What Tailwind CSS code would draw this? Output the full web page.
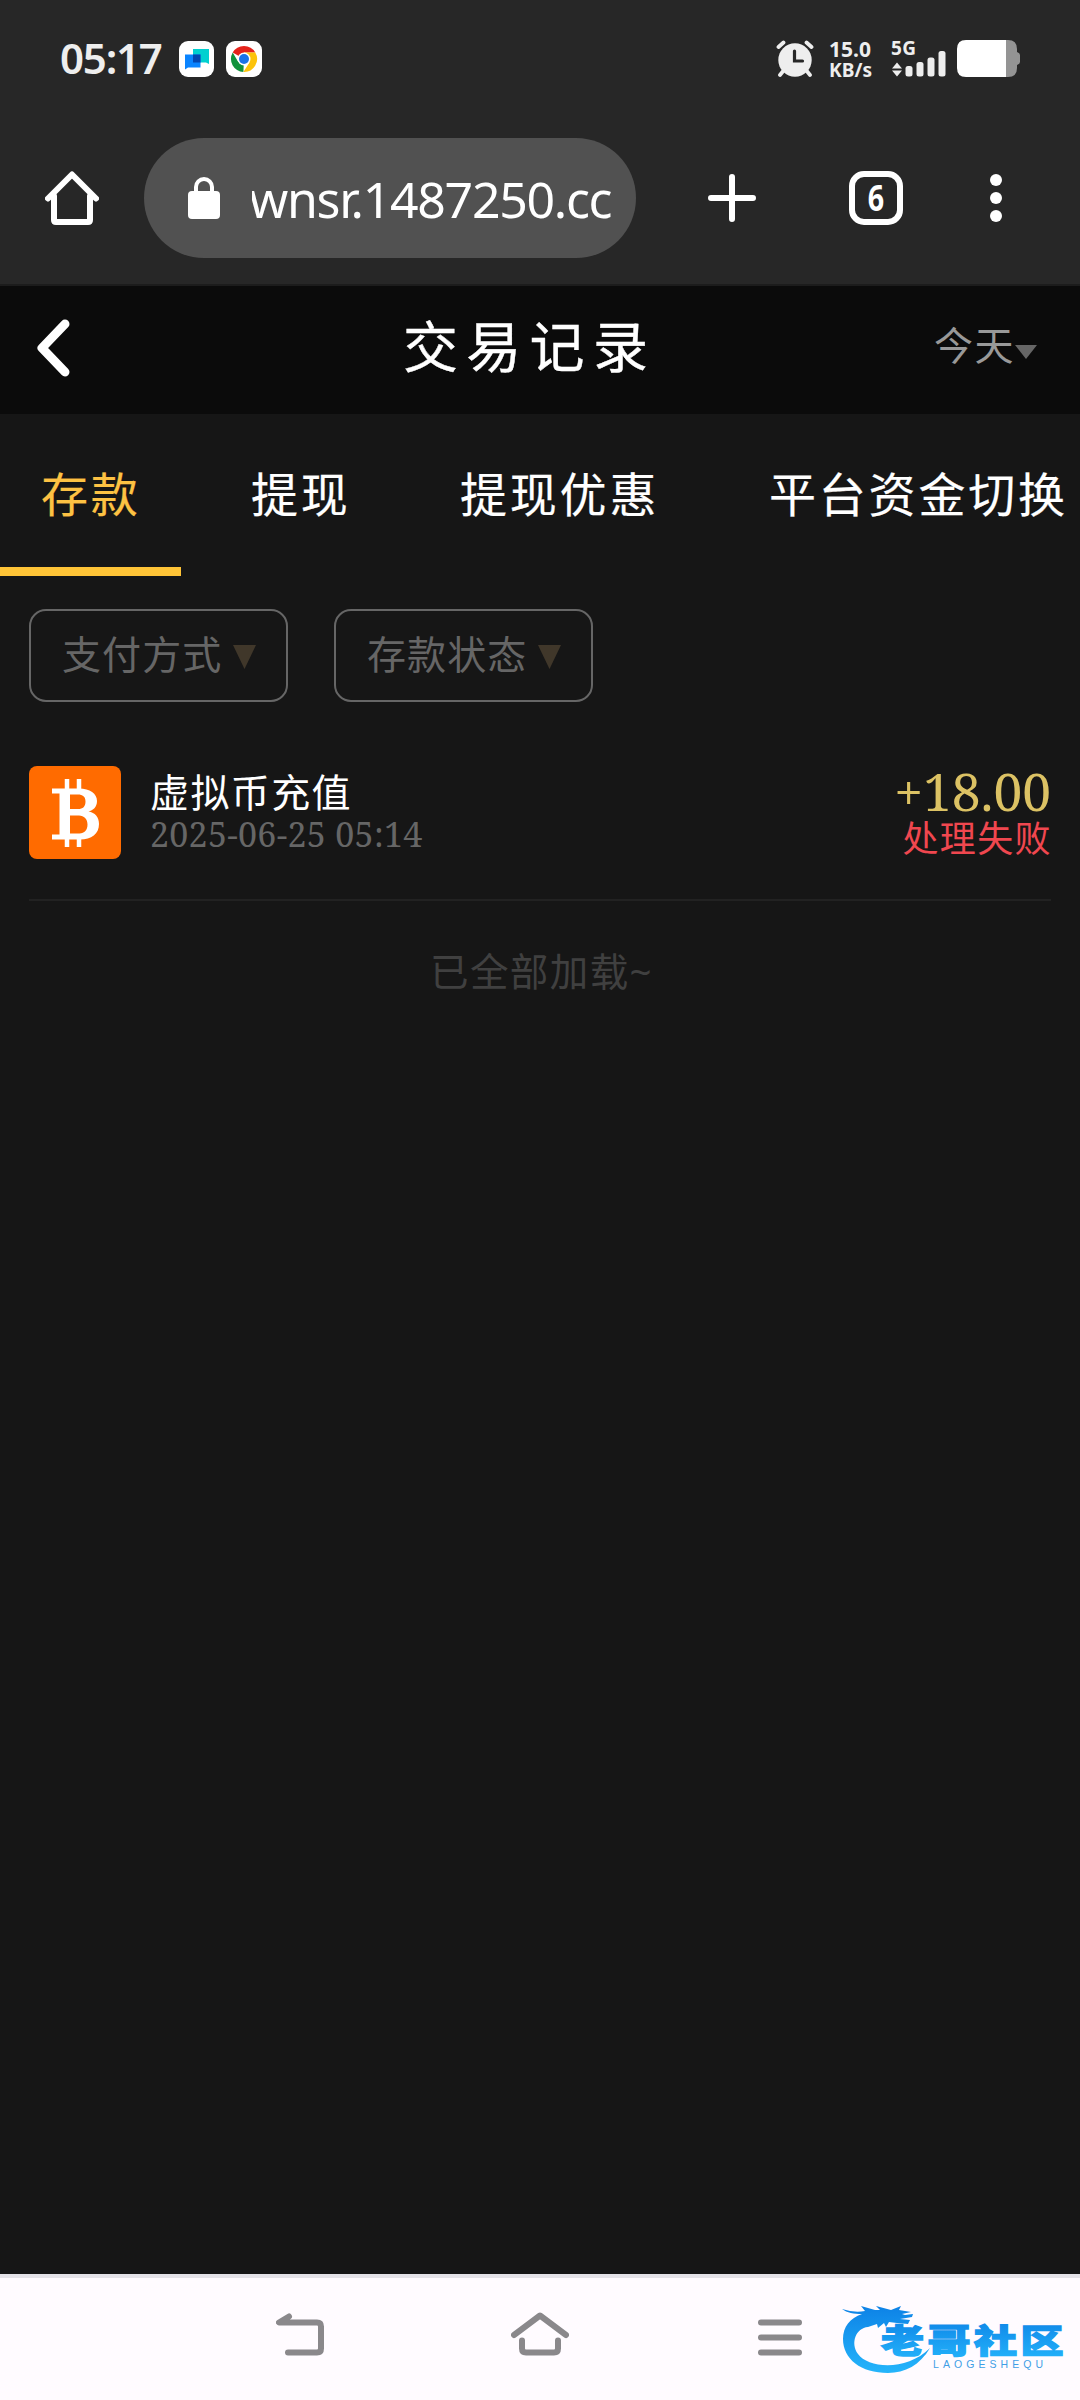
<!DOCTYPE html>
<html lang="zh-CN">
<head>
<meta charset="utf-8">
<title>交易记录</title>
<script src="https://cdn.jsdelivr.net/npm/@tailwindcss/browser@4"></script>
</head>
<body class="w-[1080px] h-[2400px] overflow-hidden bg-[#161616] flex flex-col whitespace-nowrap font-['Noto_Sans','Noto_Sans_CJK_SC',sans-serif] text-white">

<!-- status bar -->
<div class="h-[118px] shrink-0 bg-[#272727] flex justify-between px-[60px] pt-[40px]">
  <div class="flex h-[37px] items-center">
    <span class="text-[42px] leading-[56px] -mt-[2px] font-semibold text-[#eee] w-[119px] tracking-[-1.2px]">05:17</span>
    <svg class="w-[36px] h-[36px] mr-[11px]" viewBox="0 0 36 36"><rect width="35" height="36" rx="9" fill="#fff"/><path d="M14 8h16v15l-3-1.500H14z" fill="#00d0d0"/><path d="M6 13.500h15.500v13H9L6 28.500z" fill="#0a84ff"/><rect x="14" y="13.500" width="7.500" height="8" fill="#0346b0"/></svg>
    <svg class="w-[36px] h-[36px]" viewBox="0 0 36 36"><rect width="36" height="36" rx="9" fill="#fff"/><path d="M18 18 6.700 11.500A13 13 0 0 1 29.300 11.500H18z" fill="#e5231b"/><path d="M18 18 17.400 31A13 13 0 0 1 6.700 11.500L12.400 21.200z" fill="#11913c"/><path d="M18 11.500h11.300A13 13 0 0 1 17.400 31L23.600 21.200z" fill="#fcc30a"/><circle cx="18" cy="18" r="6.500" fill="#fff"/><circle cx="18" cy="18" r="5" fill="#1a73e8"/></svg>
  </div>
  <div class="flex h-[37px] text-[#eee]">
    <svg class="w-[40px] h-[37px] mr-[14px]" viewBox="0 0 40 37" fill="none" stroke="#eee" stroke-linecap="round"><circle cx="19" cy="20" r="16.700" fill="#eee" stroke="none"/><path d="M2.500 7l5-4.500M30.500 2.500l5 4.500M8 30l-4 5M30 30l4 5" stroke-width="3.800"/><path d="M18.500 11v10h8" stroke="#272727" stroke-width="3.200"/></svg>
    <svg class="w-[46px] h-[37px] mr-[15px] overflow-visible" viewBox="0 0 46 37" fill="#eee" font-weight="700"><text x="-1" y="16.500" font-size="22" textLength="42" lengthAdjust="spacingAndGlyphs">15.0</text><text x="-1" y="36.500" font-size="19.500" textLength="43" lengthAdjust="spacingAndGlyphs">KB/s</text></svg>
    <svg class="w-[56px] h-[37px] mr-[10px] overflow-visible" viewBox="0 0 56 37" fill="#eee"><text x="0" y="15" font-size="19" font-weight="700" textLength="25">5G</text><path d="M1 28.500l5-6 5 6zM1 30.500l5 6 5-6z"/><rect x="14.500" y="26" width="7" height="10.500" rx="2.500"/><rect x="25.500" y="22" width="7" height="14.500" rx="2.500"/><rect x="36.500" y="17.500" width="7" height="19" rx="2.500"/><rect x="47.500" y="11" width="7" height="25.500" rx="2.500"/></svg>
    <svg class="w-[63px] h-[37px]" viewBox="0 0 63 37"><path d="M49 0h2q9 0 9 9v3q3 1 3 3v7q0 2-3 3v3q0 9-9 9h-2z" fill="#949494"/><path d="M9 0h40v37H9q-9 0-9-9V9q0-9 9-9z" fill="#fff"/></svg>
  </div>
</div>

<!-- browser toolbar -->
<div class="h-[168px] shrink-0 bg-[#272727] flex pt-[20px] pl-[45px] border-b-2 border-[#1c1c1c]">
  <svg class="w-[54px] h-[54px] mt-[33px] mr-[45px]" viewBox="0 0 54 54" fill="none" stroke="#fff" stroke-width="6" stroke-linejoin="round" stroke-linecap="round"><path d="M3 27.500 27 3.500 51 27.500M9 25v24q0 2 2 2h32q2 0 2-2V25" /></svg>
  <div class="w-[492px] h-[120px] rounded-full bg-[#515151] flex items-center pl-[43px]">
    <svg class="w-[34px] h-[44px] mr-[31px]" viewBox="0 0 34 44"><rect x="1" y="15" width="32" height="28" rx="4" fill="#fff"/><path d="M9 17v-6a8 8 0 0 1 16 0v6" fill="none" stroke="#fff" stroke-width="4"/></svg>
    <div class="w-[364px] overflow-hidden"><span class="text-[50px] leading-[70px] tracking-[-1.300px] block mt-[2px] -ml-[3px]">wnsr.1487250.cc</span></div>
  </div>
  <svg class="w-[48px] h-[48px] mt-[36px] ml-[72px]" viewBox="0 0 48 48" stroke="#fff" stroke-width="6" stroke-linecap="round"><path d="M24 3v42M3 24h42"/></svg>
  <div class="w-[54px] h-[54px] mt-[33px] ml-[93px] border-[6px] rounded-[15px] border-white flex items-center justify-center"><span class="text-[35px] leading-[42px] font-bold scale-x-[.82]">6</span></div>
  <div class="mt-[36px] ml-[87px] flex flex-col gap-[6px]"><i class="w-[12px] h-[12px] rounded-full bg-white"></i><i class="w-[12px] h-[12px] rounded-full bg-white"></i><i class="w-[12px] h-[12px] rounded-full bg-white"></i></div>
</div>

<!-- page header -->
<div class="h-[128px] shrink-0 bg-[#0b0b0b] flex items-center pl-[36px] pr-[43px]">
  <svg class="w-[36px] h-[60px] mt-[-4px]" viewBox="0 0 36 60" fill="none" stroke="#fff" stroke-width="9" stroke-linecap="round" stroke-linejoin="round"><path d="M29 6 6 30 29 54"/></svg>
  <h1 class="ml-[331px] text-[55px] leading-[80px] tracking-[8.300px] mt-[-8px] [-webkit-text-stroke:0.4px_white]">交易记录</h1>
  <div class="ml-auto flex items-center"><span class="text-[39px] leading-[60px] tracking-[1.500px] text-[#999] mt-[-10px]">今天</span><svg class="w-[22px] h-[14px] mt-[4px]" viewBox="0 0 22 14"><path d="M0 0h22L11 14z" fill="#666"/></svg></div>
</div>

<!-- tabs -->
<div class="h-[162px] shrink-0 flex gap-[28px] text-[47px] leading-[161px] tracking-[2.800px]">
  <div class="w-[181px] shrink-0 pl-[41px] text-[#fdc243] border-b-[9px] border-[#ffc437] [-webkit-text-stroke:0.2px]">存款</div>
  <div class="w-[181px] shrink-0 pl-[42px] [-webkit-text-stroke:0.2px]">提现</div>
  <div class="w-[281px] shrink-0 pl-[42px] [-webkit-text-stroke:0.2px]">提现优惠</div>
  <div class="shrink-0 pl-[42px] [-webkit-text-stroke:0.2px]">平台资金切换</div>
</div>

<!-- filters -->
<div class="flex gap-[46px] mt-[33px] ml-[29px] h-[93px] shrink-0 text-[#666] text-[39px] tracking-[1.100px] leading-[86px]">
  <div class="w-[259px] border-2 border-[#666] rounded-[17px] pl-[31px] flex"><span class="w-[171px]">支付方式</span><svg class="w-[23px] h-[24px] mt-[34px]" viewBox="0 0 23 24"><path d="M0 0h23L11.500 24z" fill="#40372a"/></svg></div>
  <div class="w-[259px] border-2 border-[#666] rounded-[17px] pl-[31px] flex"><span class="w-[171px]">存款状态</span><svg class="w-[23px] h-[24px] mt-[34px]" viewBox="0 0 23 24"><path d="M0 0h23L11.500 24z" fill="#40372a"/></svg></div>
</div>

<!-- record -->
<div class="mx-[29px] mt-[64px] h-[135px] shrink-0 border-b-2 border-[#222] flex">
  <svg class="w-[92px] h-[93px] mr-[29px]" viewBox="0 0 92 93"><rect width="92" height="93" rx="8" fill="#ff6b00"/><path d="M23 22.500h27c11 0 18 5 18 12.500 0 6-4 9.500-8.500 10.500C66 46.500 70 51 70 58c0 10-7.500 15.500-19 15.500H23v-5h7.500v-41H23zM41 28.500v14.500h8c5 0 7.500-2.500 7.500-7.500s-3-7-7.500-7zM41 49.500v18h9.500c5 0 8-3.500 8-9s-3.500-9-8.500-9z" fill="#fff" fill-rule="evenodd"/><path d="M38 13v10M50 13v10M38 73v8M50 73v8" stroke="#fff" stroke-width="4.500"/></svg>
  <div class="flex flex-col">
    <span class="text-[39px] leading-[51px] tracking-[1.400px]">虚拟币充值</span>
    <span class="text-[34px] leading-[36px] -mt-[1px] tracking-[.3px] text-[#666] font-['Noto_Serif','Liberation_Serif',serif]">2025-06-25 05:14</span>
  </div>
  <div class="ml-auto flex flex-col items-end">
    <span class="text-[51.500px] leading-[51px] text-[#dcc264] font-['Noto_Serif','Liberation_Serif',serif]">+18.00</span>
    <span class="text-[36px] leading-[40px] mt-[2px] tracking-[1.400px] -mr-[1px] text-[#f0474f]">处理失败</span>
  </div>
</div>
<div class="mt-[40px] h-[60px] shrink-0 text-center pl-[3px] text-[38.500px] leading-[60px] tracking-[1.400px] text-[#404040]">已全部加载~</div>

<!-- system navigation -->
<div class="mt-auto h-[126px] shrink-0 bg-[#fffbff] border-t-4 border-[#e4e2e8] flex pl-[276px] pt-[34px] text-[#8a888b]">
  <svg class="w-[48px] h-[45px]" viewBox="0 0 48 45" fill="none" stroke="currentColor" stroke-width="6" stroke-linecap="round" stroke-linejoin="round"><path d="M13 4.500 3 10.500h38q4 0 4 4v22q0 4-4 4H12"/></svg>
  <svg class="w-[58px] h-[45px] ml-[187px]" viewBox="0 0 58 45" fill="none" stroke="currentColor" stroke-width="6" stroke-linecap="round" stroke-linejoin="round"><path d="M3 23 29 3.500 55 23M11 28.500v8q0 4 4 4h28q4 0 4-4v-8"/></svg>
  <svg class="w-[46px] h-[45px] ml-[188px]" viewBox="0 0 46 45" stroke="currentColor" stroke-width="6" stroke-linecap="round"><path d="M4 10.500h38M4 25.500h38M4 40.500h38"/></svg>
  <svg class="w-[230px] h-[80px] ml-[37px] -mt-[12px]" viewBox="840 2300 230 80">
    <defs><linearGradient id="g" x1="0" y1="0" x2="0" y2="1"><stop offset="0" stop-color="#0d82e6"/><stop offset="1" stop-color="#25b5fb"/></linearGradient></defs>
    <path d="M842 2309q12 4 23 2l-4-5 14 4 5 0-4-4 15 4 10-4-2 4 12 2-9 2 3 1 8-1-1 3-12 2 10 1-2 4-11-1-8-1-3 5-2-4-6 5-1-4-9 3C856 2328 850 2343 858 2354c10 14 48 18 72-6-10 17-25 25-42 25-27 0-45-14-45-34 0-12 7-21 19-25-8 0-15-1-20-5z" fill="url(#g)"/>
    <g transform="translate(881 2353) scale(1 .76)"><text x="0" y="0" font-size="43" letter-spacing="3.500" font-weight="900" fill="url(#g)" stroke="url(#g)" stroke-width="1.800" font-family="Noto Sans CJK SC">老哥社区</text></g>
    <text x="933" y="2367.500" font-size="10.500" fill="#3f9fe6" textLength="110" font-family="Liberation Sans">LAOGESHEQU</text>
  </svg>
</div>
</body>
</html>
